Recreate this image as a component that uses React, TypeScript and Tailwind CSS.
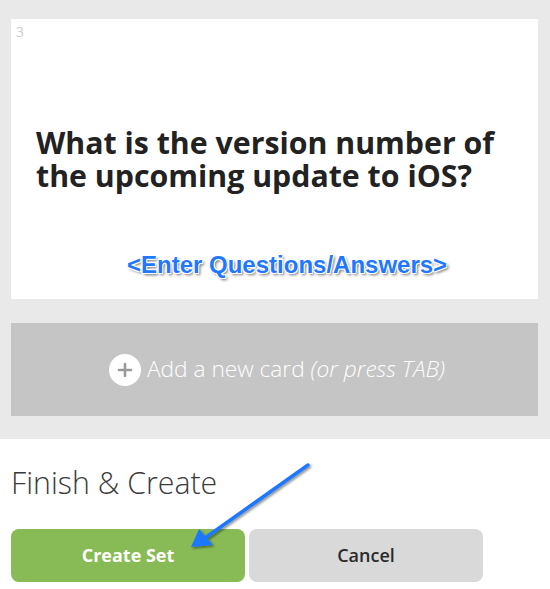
export default function App() {
  return (
    <main className="relative w-[550px] h-[589px] overflow-hidden bg-white font-['Open_Sans',sans-serif]">
      {/* Cards area */}
      <section className="bg-[#e9e9e9] pt-[19px] pl-[11px] pr-[12px] pb-[23px]">
        <div className="h-[280px] bg-white flex flex-col">
          <span className="pl-[5px] pt-[5px] text-[14px] leading-[16px] text-[#cfcfcf]">3</span>
          <h2 className="mt-[86px] pl-[25px] pr-[30px] text-[30.3px] leading-[33px] font-bold text-[#222]">
            What is the version number of the upcoming update to iOS?
          </h2>
          <p className="mt-[59px] pl-[116px] font-['Liberation_Sans',Arial,sans-serif] text-[24px] leading-[28px] font-bold text-[#1f78ff] [text-shadow:-1px_-1px_0_#fff,1px_-1px_0_#fff,-1px_1px_0_#fff,1px_1px_0_#fff,2px_2px_3px_rgba(0,0,0,0.6)]">
            &lt;Enter Questions/Answers&gt;
          </p>
        </div>

        <button className="mt-[24px] w-full h-[93px] bg-[#c5c5c5] flex items-center justify-center gap-[6px] pl-[5px] text-white text-[22.7px] font-light">
          <span className="w-[32px] h-[32px] rounded-full bg-white flex items-center justify-center">
            <svg width="16" height="16" viewBox="0 0 16 16">
              <path d="M8 2v12M2 8h12" stroke="#9a9a9a" strokeWidth="2.6" strokeLinecap="round" />
            </svg>
          </span>
          <span>
            Add a new card <em className="italic">(or press TAB)</em>
          </span>
        </button>
      </section>

      {/* Finish */}
      <section className="pl-[11px] pt-[24px]">
        <h3 className="text-[30.3px] leading-[40px] font-light text-[#3a3a3a]">Finish &amp; Create</h3>
        <div className="mt-[26px] flex gap-[4px]">
          <button className="w-[234px] h-[53px] rounded-[8px] bg-[#88bb55] text-white text-[18px] font-bold">
            Create Set
          </button>
          <button className="w-[234px] h-[53px] rounded-[8px] bg-[#d9d9d9] text-[#2a2a2a] text-[18px] font-semibold">
            Cancel
          </button>
        </div>
      </section>

      {/* annotation arrow */}
      <svg className="absolute left-0 top-0 pointer-events-none" width="550" height="589">
        <defs>
          <filter id="sh" x="-20%" y="-20%" width="140%" height="140%">
            <feDropShadow dx="1.5" dy="1.5" stdDeviation="1.2" floodColor="#000" floodOpacity="0.45" />
          </filter>
        </defs>
        <g filter="url(#sh)">
          <path d="M308 465 L205 538" stroke="#1f78ff" strokeWidth="3.5" strokeLinecap="round" />
          <path d="M191 547 L199 529 L213 545 Z" fill="#1f78ff" />
        </g>
      </svg>
    </main>
  )
}
